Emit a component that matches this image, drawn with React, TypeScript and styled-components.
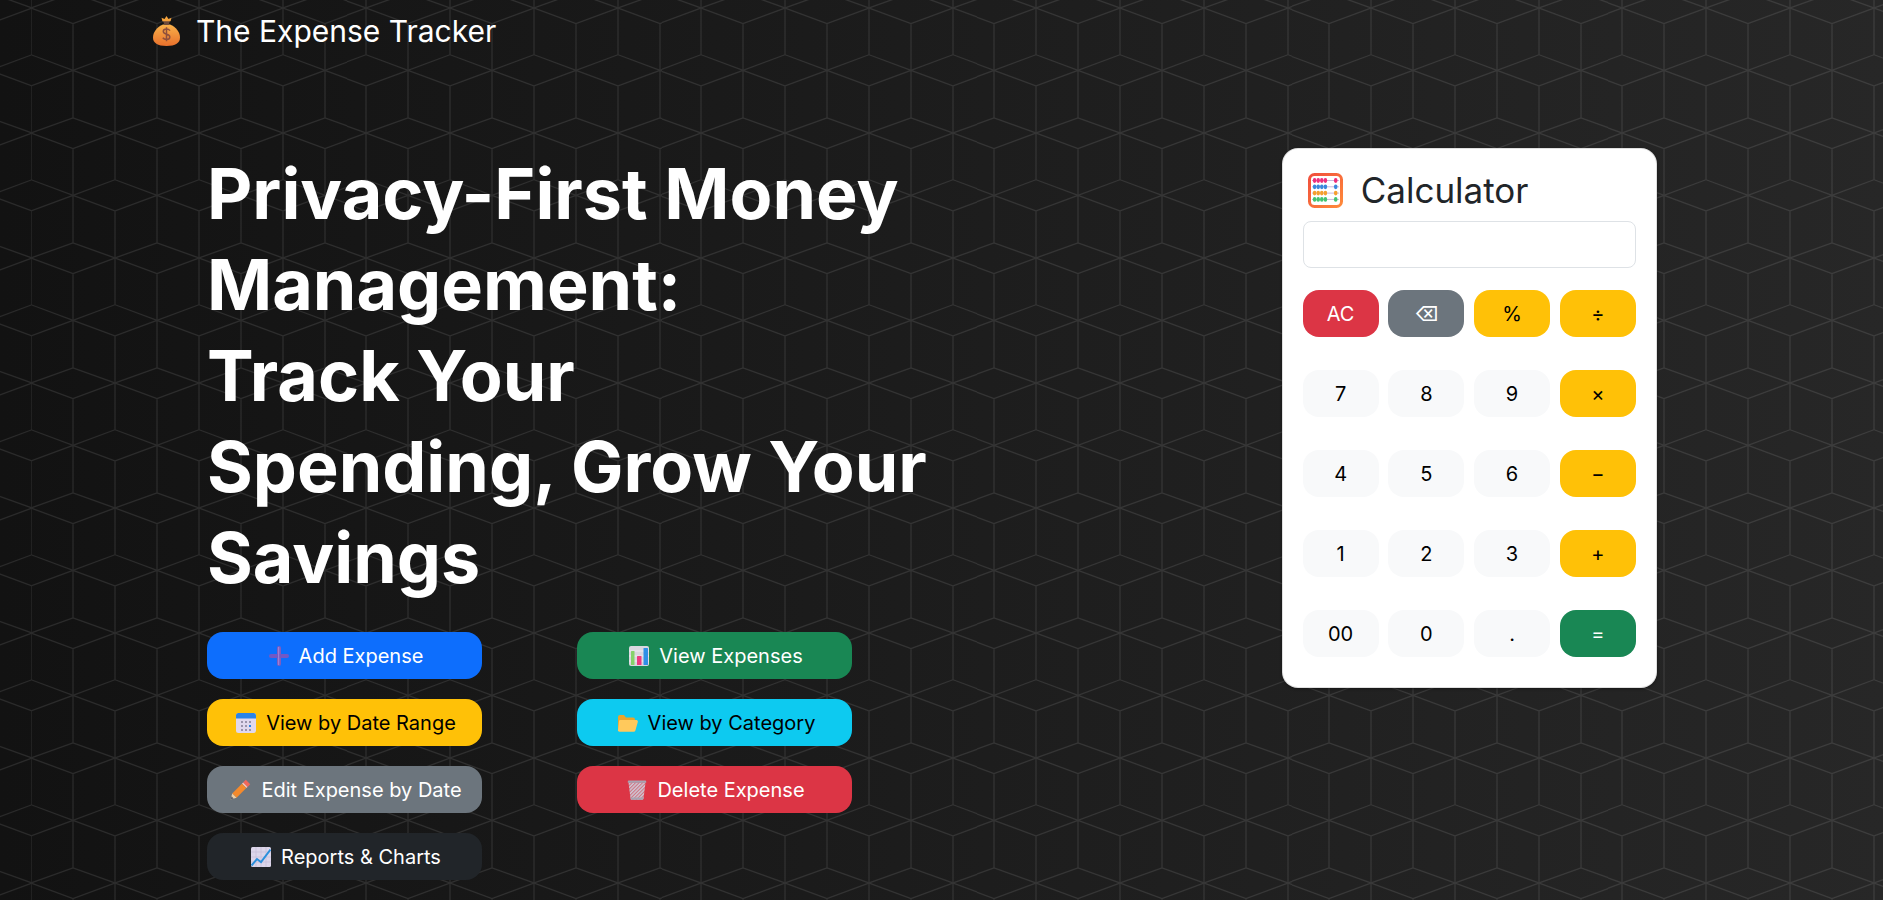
import React from 'react';
import styled, { createGlobalStyle } from 'styled-components';

const cubes = encodeURIComponent(
  `<svg xmlns="http://www.w3.org/2000/svg" width="84" height="125" viewBox="0 0 84 125" preserveAspectRatio="none"><path fill="none" stroke="#fff" stroke-opacity="0.1" stroke-width="1.2" d="M0 0V46.7L42 62.4L84 46.7V0M0 0L42 15.5L84 0M42 15.5V62.4M42 62.4L0 78V125M42 62.4L84 78V125M42 62.4V110M0 125L42 110L84 125"/></svg>`
);

const GlobalStyle = createGlobalStyle`
  html, body {
    margin: 0;
    padding: 0;
  }
  body {
    font-family: Inter, "Liberation Sans", sans-serif;
    background: #111;
  }
  * {
    box-sizing: border-box;
  }
`;

const Page = styled.div`
  min-height: 100vh;
  overflow: hidden;
  background-color: #131313;
  background-image: url("data:image/svg+xml,${cubes}"), linear-gradient(90deg, #121212, #272727);
  background-size: 83.74px 124.9px, 100% 100%;
  background-position: 31.5px 8.3px, 0 0;
`;

const Navbar = styled.nav`
  display: flex;
  align-items: center;
  gap: 16px;
  height: 62px;
  padding-left: 153px;
`;

const Brand = styled.span`
  color: #fff;
  font-size: 30px;
  font-weight: 400;
`;

const Hero = styled.main`
  display: flex;
  align-items: flex-start;
  justify-content: space-between;
  width: 1656.7px;
  padding: 86px 0 19px 207px;
`;

const Intro = styled.section`
  width: 760px;
`;

const Headline = styled.h1`
  margin: 0 0 29px;
  max-width: 725px;
  color: #fff;
  font-size: 70px;
  font-weight: 700;
  line-height: 91px;
`;

const ActionGrid = styled.div`
  display: grid;
  grid-template-columns: 275px 275px;
  gap: 20px 95px;
`;

const tones = {
  primary: { bg: '#0d6efd', fg: '#fff' },
  success: { bg: '#198754', fg: '#fff' },
  warning: { bg: '#ffc107', fg: '#000' },
  info: { bg: '#0dcaf0', fg: '#000' },
  secondary: { bg: '#6c757d', fg: '#fff' },
  danger: { bg: '#dc3545', fg: '#fff' },
  dark: { bg: '#212529', fg: '#fff' },
  light: { bg: '#f8f9fa', fg: '#000' },
};

type Tone = keyof typeof tones;

const ActionButton = styled.button<{ $tone: Tone }>`
  display: flex;
  align-items: center;
  justify-content: center;
  gap: 10px;
  height: 47px;
  padding: 0 0 0 3px;
  border: 0;
  border-radius: 16px;
  background: ${(p) => tones[p.$tone].bg};
  color: ${(p) => tones[p.$tone].fg};
  font-family: inherit;
  font-size: 20px;
`;

const CalcCard = styled.aside`
  width: 375px;
  height: 540px;
  padding: 0 20px;
  border: 1px solid rgba(0, 0, 0, 0.125);
  border-radius: 16px;
  background: #fff;
  box-shadow: 0 1px 3px rgba(0, 0, 0, 0.4);
`;

const CalcTitle = styled.h2`
  display: flex;
  align-items: center;
  gap: 18px;
  height: 72px;
  margin: 0;
  padding: 9px 0 0 5px;
  color: #212529;
  font-size: 35px;
  font-weight: 400;
`;

const CalcInput = styled.input`
  display: block;
  width: 100%;
  height: 47px;
  border: 1px solid #dee2e6;
  border-radius: 8px;
  background: #fff;
`;

const KeyGrid = styled.div`
  display: grid;
  grid-template-columns: repeat(4, 1fr);
  gap: 33px 9.9px;
  margin-top: 22px;
`;

const CalcKey = styled.button<{ $tone: Tone }>`
  height: 47px;
  padding: 0;
  border: 0;
  border-radius: 16px;
  background: ${(p) => tones[p.$tone].bg};
  color: ${(p) => tones[p.$tone].fg};
  font-family: inherit;
  font-size: 20px;
`;

const Emoji = styled.svg`
  flex: none;
  display: block;
`;

const TitleEmoji = styled(Emoji)`
  margin-top: 2px;
`;

const MoneyBag = () => (
  <Emoji width="27" height="30" viewBox="0 0 27 30">
    <defs>
      <linearGradient id="bag" x1="0" y1="0" x2="0" y2="1">
        <stop offset="0" stopColor="#f9b24a" />
        <stop offset="1" stopColor="#e8702c" />
      </linearGradient>
    </defs>
    <path d="M10 8.500C4 11 0 16 0 21.500c0 5.500 4.500 8.500 13.500 8.500S27 27 27 21.500C27 16 23 11 17 8.500z" fill="url(#bag)" />
    <path d="M10 4.500h7l-1.300 4.500h-4.400z" fill="#6d4a3a" />
    <path d="M8.500 1.800l3 1.200 2-3 2 3 3-1.200-.9 3.400h-8.200z" fill="#f5a33c" />
    <path d="M17 14.600c-.8-1-2-1.500-3.500-1.500-1.900 0-3.200 1-3.200 2.500 0 3.500 6.500 1.800 6.500 5.300 0 1.500-1.400 2.500-3.300 2.500-1.600 0-2.900-.6-3.700-1.700M13.500 11.200v14" fill="none" stroke="#8f4f3c" strokeWidth="1.500" />
  </Emoji>
);

const PlusIcon = () => (
  <Emoji width="20" height="20" viewBox="0 0 20 20">
    <rect x="8" y="0" width="4" height="20" rx="2" fill="#7f5cbe" />
    <rect x="0" y="8" width="20" height="4" rx="2" fill="#7358c4" />
    <rect x="9" y="1" width="1.200" height="18" fill="#9c80d6" />
  </Emoji>
);

const BarChart = () => (
  <Emoji width="20" height="20" viewBox="0 0 20 20">
    <rect width="20" height="20" rx="2" fill="#d9d7df" />
    <path d="M0 5h20M0 10h20M0 15h20" stroke="#efedf2" />
    <rect x="2" y="5" width="3.500" height="14" rx=".5" fill="#86d26a" />
    <rect x="8" y="10" width="4.500" height="9" rx=".5" fill="#ee3a7f" />
    <rect x="14.500" y="2" width="4.500" height="17" rx=".5" fill="#2f8fe6" />
  </Emoji>
);

const CalendarIcon = () => (
  <Emoji width="20" height="20" viewBox="0 0 20 20">
    <rect width="20" height="20" rx="2.500" fill="#e0d8ee" />
    <path d="M0 5.500V2.500A2.500 2.500 0 0 1 2.500 0h15A2.500 2.500 0 0 1 20 2.500v3z" fill="#2a84e8" />
    {[4, 8, 12].map((y) =>
      [5, 9, 13].map((x) => <rect key={`${x}-${y}`} x={x} y={y + 4} width="2" height="2" fill="#9a94ac" />)
    )}
    <rect x="13" y="12" width="2" height="2" fill="#2a84e8" />
  </Emoji>
);

const FolderIcon = () => (
  <Emoji width="21" height="18" viewBox="0 0 21 18">
    <path d="M1 3a2 2 0 0 1 2-2h4l2 2.500h7a2 2 0 0 1 2 2V15H1z" fill="#e9a52b" />
    <path d="M3.500 6h15.800c1 0 1.800.9 1.500 1.900l-2.400 8.500a1.900 1.900 0 0 1-1.800 1.400H2.500c-1.200 0-1.900-1-1.500-2.100l1-8.400c.1-.8.700-1.300 1.500-1.300z" fill="#ffc95c" />
  </Emoji>
);

const PencilIcon = () => (
  <Emoji width="21" height="21" viewBox="0 0 21 21">
    <path d="M15.800.8l4.400 4.400-2.700 2.700-4.400-4.400z" fill="#f2675a" />
    <path d="M13.100 3.500l4.400 4.400-1.200 1.200-4.400-4.400z" fill="#f5c5bd" />
    <path d="M11.900 4.700l4.400 4.400L6.600 18.800 2.200 14.400z" fill="#f58a2c" />
    <path d="M2.200 14.400l4.400 4.400L.6 20.400z" fill="#eccfa6" />
    <path d="M1.500 17.300l2.200 2.200-3.100.9z" fill="#5f5f6b" />
  </Emoji>
);

const TrashIcon = () => (
  <Emoji width="20" height="20" viewBox="0 0 20 20">
    <defs>
      <pattern id="mesh" width="2.500" height="2.500" patternUnits="userSpaceOnUse" patternTransform="rotate(45)">
        <rect width="2.500" height="2.500" fill="#cfc6d3" />
        <rect width="1" height="2.500" fill="#d0707f" />
      </pattern>
    </defs>
    <path d="M1.500 2.500h17l-2 16a1.500 1.500 0 0 1-1.500 1.300H5a1.500 1.500 0 0 1-1.500-1.300z" fill="url(#mesh)" />
    <path d="M.8 1.500A1 1 0 0 1 1.800.5h16.400a1 1 0 0 1 1 1v1.200H.8z" fill="#a9a3b1" />
    <path d="M3.400 17.500h13.200l-.2 1.300a1.200 1.200 0 0 1-1.200 1H4.800a1.200 1.200 0 0 1-1.200-1z" fill="#a9a3b1" />
  </Emoji>
);

const TrendIcon = () => (
  <Emoji width="20" height="20" viewBox="0 0 20 20">
    <rect width="20" height="20" rx="1.500" fill="#dcd6ea" />
    <path d="M0 5h20M0 10h20M0 15h20M5 0v20M10 0v20M15 0v20" stroke="#c5bdd8" strokeWidth=".7" />
    <path d="M.5 18.500L6 12l4 3L19.500 2.500" fill="none" stroke="#2b90dc" strokeWidth="2" />
  </Emoji>
);

const AbacusIcon = () => {
  const rows = ['#ee2f7b', '#3a88dc', '#f5a02f', '#43c46f'];
  return (
    <TitleEmoji width="35" height="35" viewBox="0 0 35 35">
      <defs>
        <linearGradient id="frame" x1="0" y1="0" x2="1" y2="1">
          <stop offset="0" stopColor="#f14f3c" />
          <stop offset="1" stopColor="#ff8a3a" />
        </linearGradient>
      </defs>
      <rect x="1.500" y="1.500" width="32" height="32" rx="5" fill="#fff" stroke="url(#frame)" strokeWidth="3" />
      {rows.map((color, r) => (
        <g key={color} fill={color}>
          <rect x="4" y={7 + r * 6.300} width="27" height="1" fill="#c9b8dc" />
          {[0, 1, 2, 3].map((b) => (
            <ellipse key={b} cx={6.600 + b * 3.600} cy={7.500 + r * 6.300} rx="1.800" ry="2.400" />
          ))}
          <ellipse cx="27.700" cy={7.500 + r * 6.300} rx="1.800" ry="2.400" />
        </g>
      ))}
    </TitleEmoji>
  );
};

const actions: { label: string; tone: Tone; icon: React.ReactNode }[] = [
  { label: 'Add Expense', tone: 'primary', icon: <PlusIcon /> },
  { label: 'View Expenses', tone: 'success', icon: <BarChart /> },
  { label: 'View by Date Range', tone: 'warning', icon: <CalendarIcon /> },
  { label: 'View by Category', tone: 'info', icon: <FolderIcon /> },
  { label: 'Edit Expense by Date', tone: 'secondary', icon: <PencilIcon /> },
  { label: 'Delete Expense', tone: 'danger', icon: <TrashIcon /> },
  { label: 'Reports & Charts', tone: 'dark', icon: <TrendIcon /> },
];

const keys: { label: string; tone: Tone }[] = [
  { label: 'AC', tone: 'danger' },
  { label: '⌫', tone: 'secondary' },
  { label: '%', tone: 'warning' },
  { label: '÷', tone: 'warning' },
  { label: '7', tone: 'light' },
  { label: '8', tone: 'light' },
  { label: '9', tone: 'light' },
  { label: '×', tone: 'warning' },
  { label: '4', tone: 'light' },
  { label: '5', tone: 'light' },
  { label: '6', tone: 'light' },
  { label: '−', tone: 'warning' },
  { label: '1', tone: 'light' },
  { label: '2', tone: 'light' },
  { label: '3', tone: 'light' },
  { label: '+', tone: 'warning' },
  { label: '00', tone: 'light' },
  { label: '0', tone: 'light' },
  { label: '.', tone: 'light' },
  { label: '=', tone: 'success' },
];

export default function App() {
  return (
    <Page>
      <GlobalStyle />
      <Navbar>
        <MoneyBag />
        <Brand>The Expense Tracker</Brand>
      </Navbar>
      <Hero>
        <Intro>
          <Headline>
            Privacy-First Money Management:
            <br />
            Track Your Spending, Grow Your Savings
          </Headline>
          <ActionGrid>
            {actions.map((a) => (
              <ActionButton key={a.label} $tone={a.tone}>
                {a.icon}
                {a.label}
              </ActionButton>
            ))}
          </ActionGrid>
        </Intro>
        <CalcCard>
          <CalcTitle>
            <AbacusIcon />
            Calculator
          </CalcTitle>
          <CalcInput readOnly />
          <KeyGrid>
            {keys.map((k) => (
              <CalcKey key={k.label} $tone={k.tone}>
                {k.label}
              </CalcKey>
            ))}
          </KeyGrid>
        </CalcCard>
      </Hero>
    </Page>
  );
}
